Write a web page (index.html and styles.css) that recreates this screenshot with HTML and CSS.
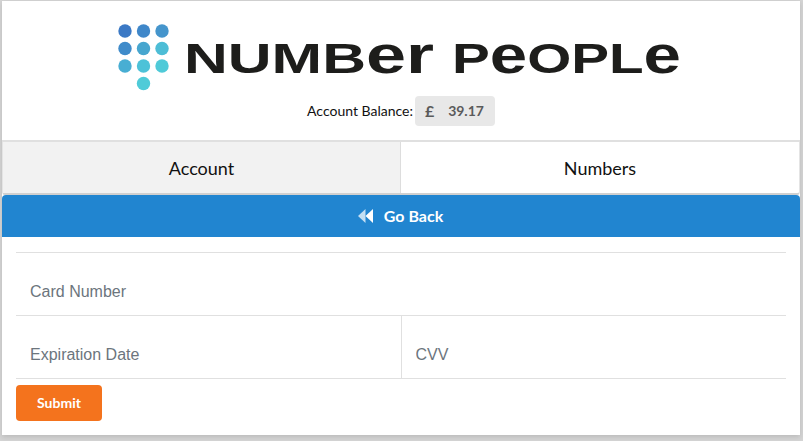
FILE: index.html
```html
<!DOCTYPE html>
<html>
  <head>
    <meta charset="utf-8">
    <title>Number People</title>
    <link rel="stylesheet" href="styles.css">
  </head>
  <body>
    <div class="card">
      <div class="header">
        <svg class="logo" width="564" height="76" viewBox="0 -4 564 76">
          <circle cx="7" cy="7" r="6.7" fill="#3b79c5"/>
          <circle cx="25.5" cy="7" r="6.7" fill="#3f87c9"/>
          <circle cx="44" cy="7" r="6.7" fill="#4595cc"/>
          <circle cx="7" cy="24.5" r="6.7" fill="#3f8bca"/>
          <circle cx="25.5" cy="24.5" r="6.7" fill="#47a6cf"/>
          <circle cx="44" cy="24.5" r="6.7" fill="#4dbdd6"/>
          <circle cx="7" cy="42" r="6.7" fill="#48aed3"/>
          <circle cx="25.5" cy="42" r="6.7" fill="#4dc2d8"/>
          <circle cx="44" cy="42" r="6.7" fill="#4fcad8"/>
          <circle cx="25.5" cy="59.5" r="6.7" fill="#4fcbd8"/>
          <text class="logo-text" x="66" y="49" textLength="250" lengthAdjust="spacingAndGlyphs">NUMB<tspan class="logo-low">er</tspan></text>
          <text class="logo-text" x="334" y="49" textLength="229" lengthAdjust="spacingAndGlyphs">P<tspan class="logo-low">e</tspan>OPL<tspan class="logo-low">e</tspan></text>
        </svg>
        <div class="balance">
          <span>Account Balance:</span>
          <span class="amount"><b class="pound">£</b><b>39.17</b></span>
        </div>
      </div>
      <div class="tabs">
        <div class="tab active">Account</div>
        <div class="tab">Numbers</div>
      </div>
      <div class="back">
        <svg width="15" height="14" viewBox="0 0 15 14">
          <path d="M7.5 0v14L0 7z" fill="#c4dff3"/>
          <path d="M15 0v14L7.5 7z" fill="#fff"/>
        </svg>
        <span>Go Back</span>
      </div>
      <form class="pay">
        <div class="row"><input type="text" placeholder="Card Number"></div>
        <div class="row split">
          <input type="text" placeholder="Expiration Date">
          <input type="text" placeholder="CVV">
        </div>
        <button type="button" class="submit">Submit</button>
      </form>
    </div>
  </body>
</html>
```

FILE: styles.css
```css
html, body {
  height: 100%;
  overflow: hidden;
}
body {
  margin: 0;
  background: #d4d4d4;
  font-family: "Lato", "Liberation Sans", sans-serif;
  color: #111;
}
.card {
  width: 798px;
  height: 434px;
  margin: 1px 0 0 2px;
  background: #fff;
  box-shadow: 0 2px 5px rgba(0, 0, 0, 0.12);
}
.header {
  height: 139px;
  border-bottom: 2px solid #e0e0e0;
  display: flex;
  flex-direction: column;
  align-items: center;
}
.logo {
  margin: 19px 0 0 -2px;
  display: block;
  flex: none;
}
.logo-text {
  font-family: "Liberation Sans", sans-serif;
  font-weight: bold;
  font-size: 43px;
  fill: #1d1d1b;
}
.logo-low {
  font-size: 51px;
}
.balance {
  display: flex;
  align-items: center;
  gap: 2px;
  font-size: 14px;
  height: 30px;
}
.balance span:first-child {
  padding-bottom: 2px;
}
.amount {
  height: 30px;
  width: 80px;
  box-sizing: border-box;
  padding: 0 11px 2px 10px;
  background: #e8e8e8;
  border-radius: 4px;
  color: #5a5a5a;
  display: flex;
  align-items: center;
  justify-content: space-between;
}
.pound {
  font-size: 16px;
}
.tabs {
  display: flex;
  box-sizing: border-box;
  height: 53px;
  border: 1px solid #e4e4e4;
  border-top: 0;
  border-bottom: 2px solid #d0d0d0;
  border-radius: 0 0 3px 3px;
}
.tab {
  flex: 1;
  display: flex;
  align-items: center;
  justify-content: center;
  font-size: 18px;
}
.tab.active {
  flex: none;
  box-sizing: border-box;
  width: 398px;
  background: #f2f2f2;
  border-right: 1px solid #ddd;
}
.back {
  height: 42px;
  background: #2185d0;
  border-radius: 4px 4px 0 0;
  color: #fff;
  display: flex;
  align-items: center;
  justify-content: center;
  gap: 11px;
  padding-right: 1px;
  font-size: 16px;
  font-weight: bold;
}
.back span {
  padding-bottom: 2px;
}
.pay {
  padding: 15px 14px 0;
}
.row {
  display: flex;
  height: 62px;
  border-top: 1px solid #e0e0e0;
}
.row.split {
  border-bottom: 1px solid #e0e0e0;
}
.row input {
  flex: 1;
  min-width: 0;
  border: 0;
  padding: 15px 14px 0;
  font-family: "Liberation Sans", sans-serif;
  font-size: 16px;
  outline: 0;
  background: transparent;
}
.row input::placeholder {
  color: #6c757d;
  opacity: 1;
}
.row.split input + input {
  border-left: 1px solid #e0e0e0;
}
.submit {
  display: block;
  margin-top: 6px;
  width: 86px;
  height: 36px;
  padding: 0 0 2px;
  border: 0;
  border-radius: 4px;
  background: #f4731d;
  color: #fff;
  font-family: "Lato", "Liberation Sans", sans-serif;
  font-size: 14px;
  font-weight: bold;
}
```
